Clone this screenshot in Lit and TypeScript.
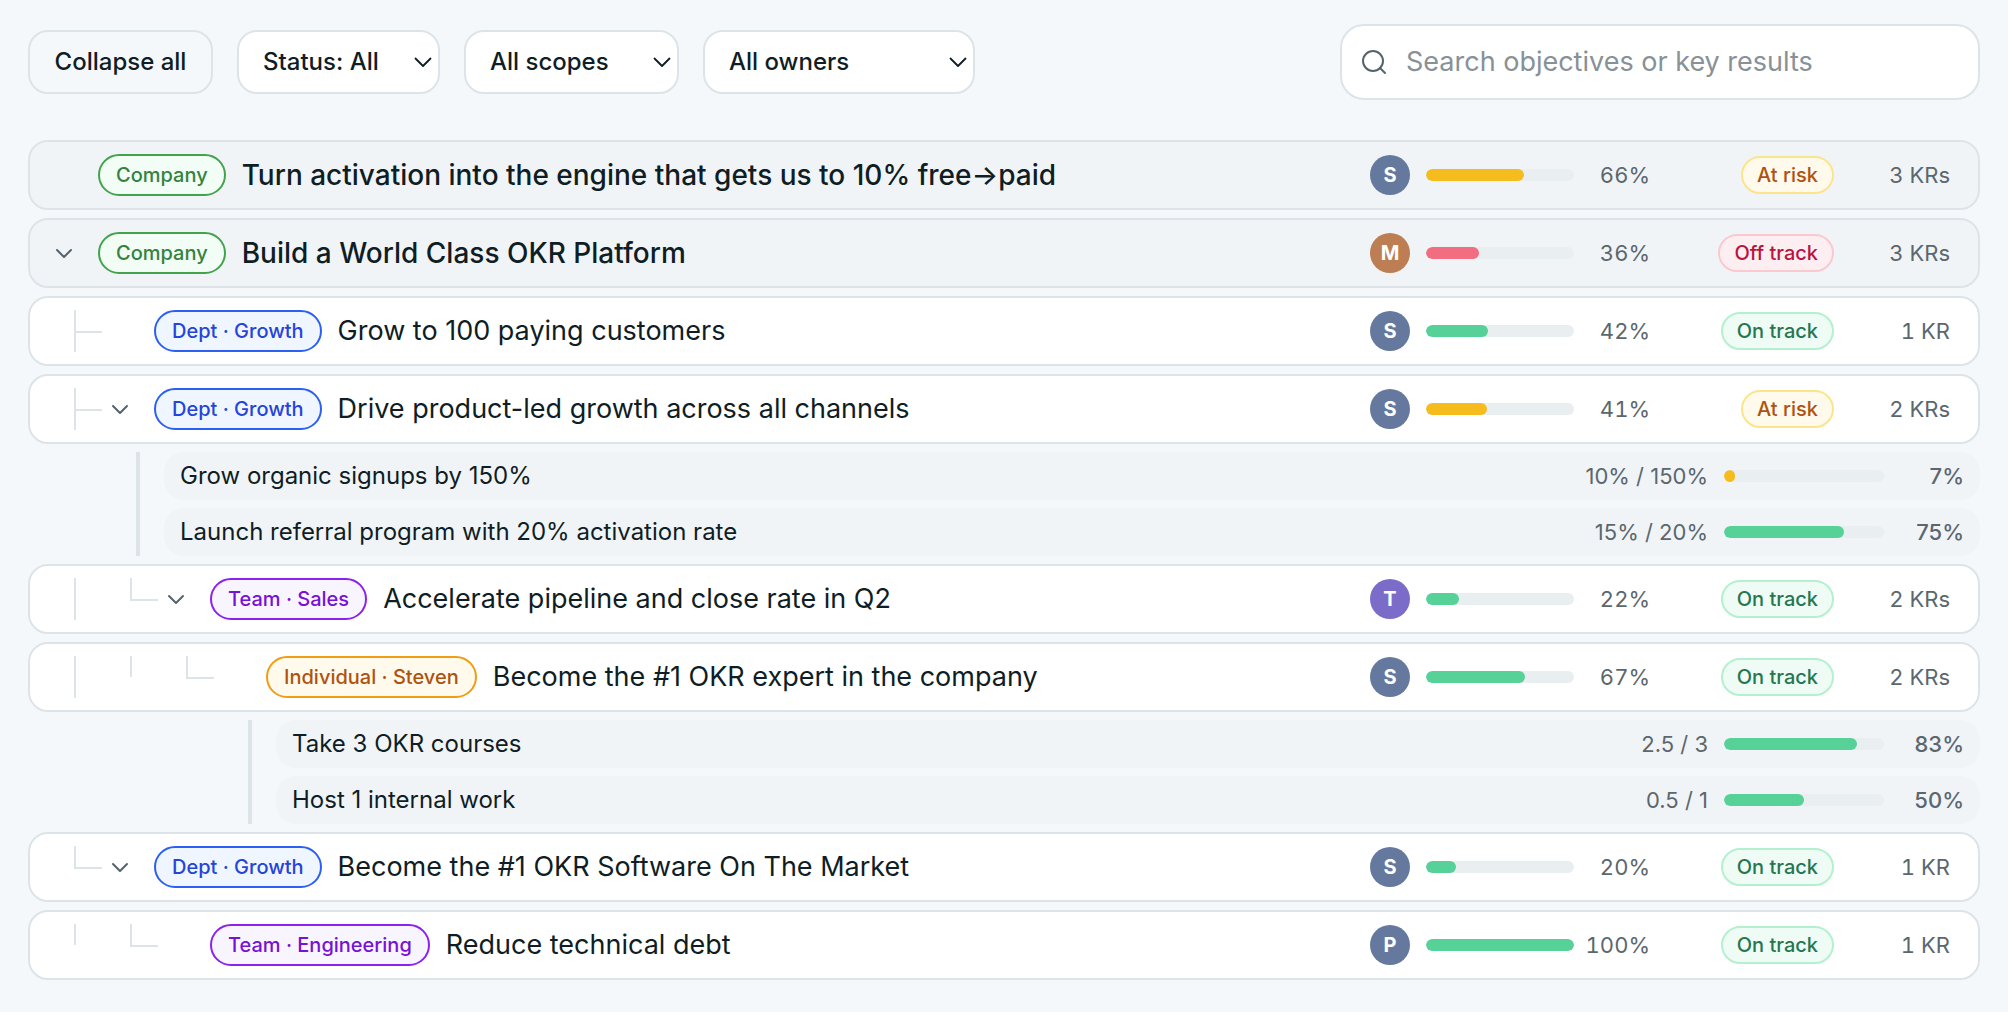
import { LitElement, html, svg, css, nothing } from "lit";
import { customElement, property, state } from "lit/decorators.js";
import { classMap } from "lit/directives/class-map.js";
import { styleMap } from "lit/directives/style-map.js";

type Scope = "company" | "dept" | "team" | "individual";
type Status = "on" | "risk" | "off";
type Guide = "line" | "half" | "tee" | "elbow";

interface KeyResult {
  name: string;
  value: string;
  percent: number;
  status: Status;
}

interface Objective {
  id: number;
  parent: number;
  scope: Scope;
  scopeLabel: string;
  title: string;
  owner: string;
  tone: string;
  percent: number;
  status: Status;
  krCount: number;
  guides: Guide[];
  expandable: boolean;
  keyResults: KeyResult[];
}

const STATUS_LABEL: Record<Status, string> = {
  on: "On track",
  risk: "At risk",
  off: "Off track",
};

const OBJECTIVES: Objective[] = [
  { id: 1, parent: 0, scope: "company", scopeLabel: "Company", title: "Turn activation into the engine that gets us to 10% free→paid", owner: "S", tone: "slate", percent: 66, status: "risk", krCount: 3, guides: [], expandable: false, keyResults: [] },
  { id: 2, parent: 0, scope: "company", scopeLabel: "Company", title: "Build a World Class OKR Platform", owner: "M", tone: "copper", percent: 36, status: "off", krCount: 3, guides: [], expandable: true, keyResults: [] },
  { id: 3, parent: 2, scope: "dept", scopeLabel: "Dept · Growth", title: "Grow to 100 paying customers", owner: "S", tone: "slate", percent: 42, status: "on", krCount: 1, guides: ["tee"], expandable: false, keyResults: [] },
  { id: 4, parent: 2, scope: "dept", scopeLabel: "Dept · Growth", title: "Drive product-led growth across all channels", owner: "S", tone: "slate", percent: 41, status: "risk", krCount: 2, guides: ["tee"], expandable: true,
    keyResults: [
      { name: "Grow organic signups by 150%", value: "10% / 150%", percent: 7, status: "risk" },
      { name: "Launch referral program with 20% activation rate", value: "15% / 20%", percent: 75, status: "on" },
    ] },
  { id: 5, parent: 4, scope: "team", scopeLabel: "Team · Sales", title: "Accelerate pipeline and close rate in Q2", owner: "T", tone: "violet", percent: 22, status: "on", krCount: 2, guides: ["line", "elbow"], expandable: true, keyResults: [] },
  { id: 6, parent: 5, scope: "individual", scopeLabel: "Individual · Steven", title: "Become the #1 OKR expert in the company", owner: "S", tone: "slate", percent: 67, status: "on", krCount: 2, guides: ["line", "half", "elbow"], expandable: false,
    keyResults: [
      { name: "Take 3 OKR courses", value: "2.5 / 3", percent: 83, status: "on" },
      { name: "Host 1 internal work", value: "0.5 / 1", percent: 50, status: "on" },
    ] },
  { id: 7, parent: 2, scope: "dept", scopeLabel: "Dept · Growth", title: "Become the #1 OKR Software On The Market", owner: "S", tone: "slate", percent: 20, status: "on", krCount: 1, guides: ["elbow"], expandable: true, keyResults: [] },
  { id: 8, parent: 7, scope: "team", scopeLabel: "Team · Engineering", title: "Reduce technical debt", owner: "P", tone: "slate", percent: 100, status: "on", krCount: 1, guides: ["half", "elbow"], expandable: false, keyResults: [] },
];

const base = css`
  :host {
    display: block;
    box-sizing: border-box;
    font-family: Inter, "Liberation Sans", sans-serif;
    color: #0f1d24;
  }
  *,
  *::before,
  *::after {
    box-sizing: border-box;
  }
`;

const meter = css`
  .meter {
    height: 12px;
    border-radius: 6px;
    background: #e9eef1;
    overflow: hidden;
  }
  .fill {
    height: 100%;
    border-radius: 6px;
  }
  .fill.on {
    background: #56d198;
  }
  .fill.risk {
    background: #f6bc1e;
  }
  .fill.off {
    background: #f36d80;
  }
`;

@customElement("objective-row")
class ObjectiveRow extends LitElement {
  @property({ attribute: false }) item!: Objective;
  @property({ type: Boolean }) collapsed = false;

  static styles = [
    base,
    meter,
    css`
      .row {
        display: flex;
        align-items: center;
        gap: 16px;
        padding: 12px 28px 12px 14px;
        border: 2px solid #dde4e8;
        border-radius: 20px;
        background: #fff;
      }
      .row.company {
        background: #f1f4f7;
      }
      .lead {
        display: flex;
        align-items: center;
      }
      .guide {
        display: block;
        flex: none;
        width: 56px;
        height: 42px;
        overflow: visible;
        fill: #dde4e8;
      }
      .slot {
        display: flex;
        flex: none;
        width: 54px;
      }
      .toggle {
        display: grid;
        place-items: center;
        width: 40px;
        height: 40px;
        padding: 0;
        border: 0;
        background: none;
        color: #55636b;
        cursor: pointer;
      }
      .toggle svg {
        width: 24px;
        height: 24px;
      }
      .toggle.closed svg {
        transform: rotate(-90deg);
      }
      .scope {
        padding: 0 16px;
        border: 2px solid;
        border-radius: 21px;
        font-size: 20px;
        line-height: 38px;
        font-weight: 500;
        white-space: nowrap;
      }
      .scope.company {
        color: #35823f;
        border-color: #43a34d;
        background: #f2fdf5;
      }
      .scope.dept {
        color: #2544d9;
        border-color: #2c60f3;
        background: #f0f6ff;
      }
      .scope.team {
        color: #7712d4;
        border-color: #8c22ee;
        background: #f9f5ff;
      }
      .scope.individual {
        color: #ae530f;
        border-color: #f09d14;
        background: #fffaeb;
      }
      .title {
        flex: 1;
        min-width: 0;
        margin: 0;
        font-size: 27px;
        line-height: 40px;
        font-weight: 400;
        white-space: nowrap;
        overflow: hidden;
        text-overflow: ellipsis;
      }
      .row.company .title {
        font-size: 28px;
        font-weight: 500;
      }
      .stats {
        display: grid;
        grid-template-columns: 40px 148px 60px 168px 100px;
        align-items: center;
        gap: 16px;
        color: #5b676e;
        font-size: 22px;
        font-variant-numeric: tabular-nums;
        line-height: 32px;
        text-align: right;
      }
      .avatar {
        display: grid;
        place-items: center;
        height: 40px;
        border-radius: 50%;
        color: #fff;
        font-size: 20px;
        font-weight: 700;
      }
      .avatar.slate {
        background: #65799f;
      }
      .avatar.copper {
        background: #bd7e53;
      }
      .avatar.violet {
        background: #7b6cc9;
      }
      .percent {
        justify-self: end;
        white-space: nowrap;
      }
      .status {
        justify-self: end;
        padding: 0 14px;
        border: 2px solid;
        border-radius: 19px;
        font-size: 20px;
        line-height: 34px;
        font-weight: 500;
        white-space: nowrap;
      }
      .status.on {
        color: #267650;
        border-color: #b4f0d0;
        background: #eefcf5;
      }
      .status.risk {
        color: #ae530f;
        border-color: #fae58c;
        background: #fffaeb;
      }
      .status.off {
        color: #b9143f;
        border-color: #fac9cf;
        background: #fdeff1;
      }
    `,
  ];

  private guide(kind: Guide) {
    const full = kind === "line" || kind === "tee";
    const branch = kind === "tee" || kind === "elbow";
    return html`<svg class="guide" viewBox="0 0 56 42" aria-hidden="true">
      <rect x="30" y="0" width="2" height=${full ? 42 : 21}></rect>
      ${branch ? svg`<rect x="30" y="21" width="28" height="2"></rect>` : nothing}
    </svg>`;
  }

  private toggle() {
    this.dispatchEvent(new CustomEvent("toggle-row", { detail: this.item.id, bubbles: true, composed: true }));
  }

  render() {
    const o = this.item;
    return html`<article class="row ${o.scope}">
      <div class="lead">
        ${o.guides.map((g) => this.guide(g))}
        <div class="slot">
          ${o.expandable
            ? html`<button
                class=${classMap({ toggle: true, closed: this.collapsed })}
                aria-label=${`Toggle ${o.title}`}
                aria-expanded=${this.collapsed ? "false" : "true"}
                @click=${this.toggle}
              >
                <svg viewBox="0 0 24 24" fill="none" stroke="currentColor" stroke-width="2" stroke-linecap="round" stroke-linejoin="round">
                  <path d="M5 9 L12 16 L19 9"></path>
                </svg>
              </button>`
            : nothing}
        </div>
        <span class="scope ${o.scope}">${o.scopeLabel}</span>
      </div>
      <h2 class="title">${o.title}</h2>
      <div class="stats">
        <span class="avatar ${o.tone}">${o.owner}</span>
        <div class="meter"><div class="fill ${o.status}" style=${styleMap({ width: `${o.percent}%` })}></div></div>
        <span class="percent">${o.percent}%</span>
        <span class="status ${o.status}">${STATUS_LABEL[o.status]}</span>
        <span class="count">${o.krCount} ${o.krCount === 1 ? "KR" : "KRs"}</span>
      </div>
    </article>`;
  }
}

@customElement("key-result-list")
class KeyResultList extends LitElement {
  @property({ attribute: false }) items: KeyResult[] = [];
  @property({ type: Number }) depth = 0;

  static styles = [
    base,
    meter,
    css`
      .list {
        display: grid;
        gap: 8px;
        margin: 0;
        padding: 0 0 0 24px;
        border-left: 4px solid #dde4e8;
        list-style: none;
      }
      .item {
        display: grid;
        grid-template-columns: 1fr auto 160px 64px;
        align-items: center;
        gap: 16px;
        padding: 8px 16px;
        border-radius: 20px;
        background: #f1f4f7;
        line-height: 32px;
      }
      .name {
        font-size: 24px;
      }
      .value,
      .percent {
        color: #5b676e;
        font-size: 22px;
        text-align: right;
        white-space: nowrap;
      }
      .percent {
        font-weight: 500;
      }
    `,
  ];

  render() {
    return html`<ul class="list" style=${styleMap({ marginLeft: `${52 + this.depth * 56}px` })}>
      ${this.items.map(
        (k) => html`<li class="item">
          <span class="name">${k.name}</span>
          <span class="value">${k.value}</span>
          <div class="meter"><div class="fill ${k.status}" style=${styleMap({ width: `${k.percent}%` })}></div></div>
          <span class="percent">${k.percent}%</span>
        </li>`,
      )}
    </ul>`;
  }
}

@customElement("app-root")
class AppRoot extends LitElement {
  @state() private closed = new Set<number>();

  static styles = [
    base,
    css`
      :host {
        min-height: 100vh;
        padding: 24px 28px 32px;
        background: #f4f8fa;
      }
      .toolbar {
        display: flex;
        align-items: center;
        gap: 24px;
        margin-bottom: 40px;
      }
      .control {
        height: 64px;
        padding: 0 24px;
        border: 2px solid #dde4e8;
        border-radius: 20px;
        background: #fff;
        color: inherit;
        font: 500 24px / 32px Inter, "Liberation Sans", sans-serif;
        white-space: nowrap;
      }
      .collapse {
        min-width: 185px;
        background: #f5f8fb;
        cursor: pointer;
      }
      .picker {
        display: grid;
        align-items: center;
      }
      .picker > * {
        grid-area: 1 / 1;
      }
      .picker select {
        width: 100%;
        appearance: none;
      }
      .picker svg {
        justify-self: end;
        width: 20px;
        height: 20px;
        margin-right: 8px;
        pointer-events: none;
      }
      .status {
        width: 203px;
      }
      .scope {
        width: 215px;
      }
      .owner {
        width: 272px;
      }
      .search {
        display: flex;
        align-items: center;
        gap: 18px;
        width: 640px;
        height: 76px;
        margin-left: auto;
        padding: 0 20px 0 18px;
        border: 2px solid #dde4e8;
        border-radius: 24px;
        background: #fff;
      }
      .search svg {
        flex: none;
        width: 28px;
        height: 28px;
        color: #55636b;
      }
      .search input {
        flex: 1;
        min-width: 0;
        padding: 0;
        border: 0;
        outline: 0;
        background: none;
        color: inherit;
        font: 400 27px / 40px Inter, "Liberation Sans", sans-serif;
      }
      .search input::placeholder {
        color: #879196;
        opacity: 1;
      }
      .tree {
        display: grid;
        gap: 8px;
      }
    `,
  ];

  private toggleRow(e: CustomEvent<number>) {
    const next = new Set(this.closed);
    if (!next.delete(e.detail)) next.add(e.detail);
    this.closed = next;
  }

  private toggleAll() {
    this.closed = this.closed.size ? new Set() : new Set(OBJECTIVES.filter((o) => o.expandable).map((o) => o.id));
  }

  private isVisible(o: Objective): boolean {
    if (!o.parent) return true;
    if (this.closed.has(o.parent)) return false;
    const parent = OBJECTIVES.find((p) => p.id === o.parent);
    return parent ? this.isVisible(parent) : true;
  }

  private picker(name: string, label: string, options: string[]) {
    return html`<div class="picker ${name}">
      <select class="control" aria-label=${label}>
        ${options.map((text) => html`<option>${text}</option>`)}
      </select>
      <svg viewBox="0 0 20 20" fill="none" stroke="currentColor" stroke-width="1.8" stroke-linecap="round" stroke-linejoin="round" aria-hidden="true">
        <path d="M3.5 6.5 L11 14 L18.5 6.5"></path>
      </svg>
    </div>`;
  }

  render() {
    return html`
      <div class="toolbar">
        <button class="control collapse" @click=${this.toggleAll}>${this.closed.size ? "Expand all" : "Collapse all"}</button>
        ${this.picker("status", "Status", ["Status: All", "On track", "At risk", "Off track"])}
        ${this.picker("scope", "Scope", ["All scopes", "Company", "Dept", "Team", "Individual"])}
        ${this.picker("owner", "Owner", ["All owners", "Steven"])}
        <label class="search">
          <svg viewBox="0 0 28 28" fill="none" stroke="currentColor" stroke-width="2" stroke-linecap="round" aria-hidden="true">
            <circle cx="13" cy="13" r="10"></circle>
            <path d="M20 20 L25 25"></path>
          </svg>
          <input type="search" placeholder="Search objectives or key results" aria-label="Search objectives or key results" />
        </label>
      </div>
      <main class="tree" @toggle-row=${this.toggleRow}>
        ${OBJECTIVES.filter((o) => this.isVisible(o)).map(
          (o) => html`
            <objective-row .item=${o} ?collapsed=${this.closed.has(o.id)}></objective-row>
            ${o.keyResults.length && !this.closed.has(o.id)
              ? html`<key-result-list .items=${o.keyResults} .depth=${o.guides.length}></key-result-list>`
              : nothing}
          `,
        )}
      </main>
    `;
  }
}
